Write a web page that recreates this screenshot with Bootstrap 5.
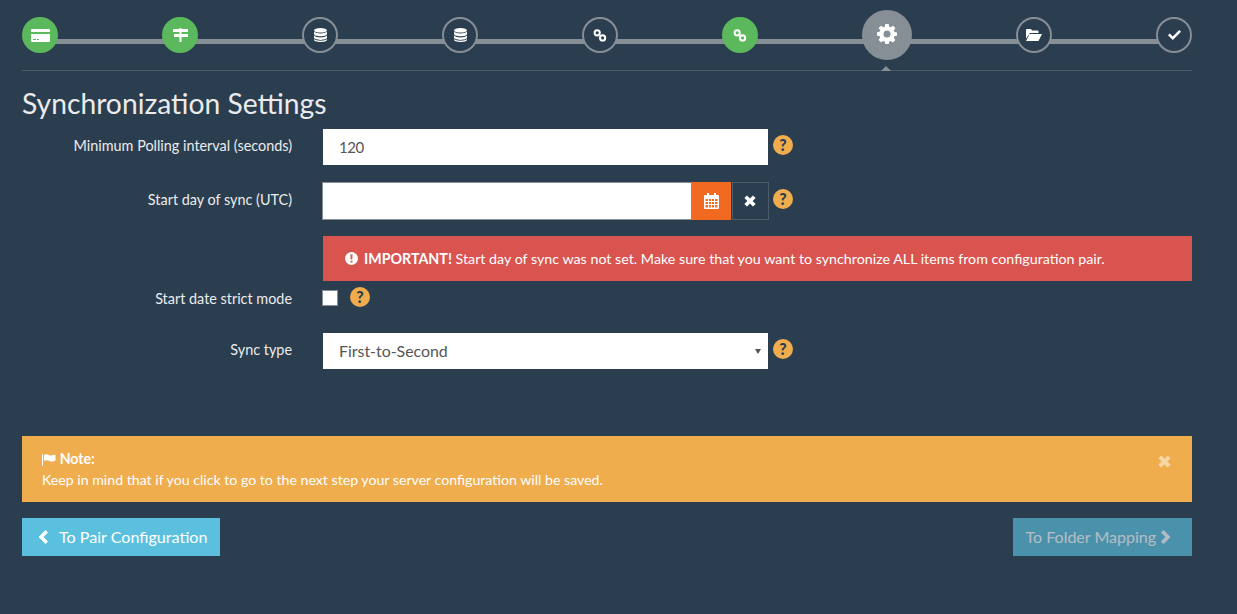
<!DOCTYPE html>
<html lang="en">
<head>
    <meta charset="UTF-8">
    <meta name="viewport" content="width=device-width, initial-scale=1.0">
    <title>Synchronization Settings</title>
    <link href="https://cdn.jsdelivr.net/npm/bootstrap@5.3.0/dist/css/bootstrap.min.css" rel="stylesheet">
    <style>
        html, body { height: 100%; }
        body { background: #2b3e50; color: #ebebeb; font-family: Lato, "Liberation Sans", sans-serif; font-size: 15px; overflow: hidden; }
        .page-wrap { width: 1170px; margin-left: 22px; }
        .stepper { height: 50px; margin-top: 10px; background: linear-gradient(#868e96, #868e96) no-repeat 18px 29px / calc(100% - 36px) 5px; }
        .step { width: 36px; height: 36px; border-radius: 50%; border: 2px solid #868e96; background: #2b3e50; color: #fff; position: relative; }
        .step.done { background: #5cb85c; border-color: #5cb85c; }
        .step.current { width: 50px; height: 50px; background: #868e96; }
        .step.current::after { content: ""; position: absolute; left: 17px; top: 54px; border: 5px solid transparent; border-top: 0; border-bottom-color: #868e96; }
        .step.current svg { margin-bottom: 2px; }
        .step svg { fill: #fff; display: block; }
        .step-rule { margin: 10px 0 0; border-top: 1px solid #4e5d6c; opacity: 1; }
        .page-title { font-size: 28.25px; font-weight: 400; color: #ebebeb; margin: 15px 0 9px; line-height: 34px; }
        .field-label { width: 270px; margin: 0 31px 0 0; padding-bottom: 3px; text-align: right; font-size: 14.4px; color: #ebebeb; }
        .field-box { width: 445px; }
        .form-control.plain, .form-select.plain { height: 36px; border: 0; border-radius: 0; padding: 0 16px; font-size: 15px; color: #555; background-color: #fff; box-shadow: none; }
        .form-control.plain { letter-spacing: -.5px; }
        .form-select.plain { font-size: 15.9px; background-image: url("data:image/svg+xml,%3Csvg xmlns='http://www.w3.org/2000/svg' viewBox='0 0 6 6'%3E%3Cpath fill='%23555' d='M0 1h6L3 6z'/%3E%3C/svg%3E"); background-size: 6px 6px; background-position: right 7px center; }
        .date-row { margin-top: 17px; }
        .date-group { width: 447px; margin-left: -1px; height: 38px; }
        .date-group .form-control { flex: 1 1 0; min-width: 0; height: 38px; border: 1px solid #868e96; border-right: 0; border-radius: 0; box-shadow: none; }
        .date-btn { flex: none; width: 40px; height: 38px; padding: 0; border: 0; border-radius: 0; display: flex; align-items: center; justify-content: center; background: #f26a21; }
        .date-btn.clear { width: 37px; margin-left: 1px; background: #2b3e50; border: 1px solid #4e5d6c; padding-right: 1px; }
        .date-btn svg { fill: #fff; display: block; }
        .help-mark { width: 20px; height: 20px; margin: 0 0 4px 5px; border-radius: 50%; background: #f0ad4e; color: #2b3e50; font-weight: 900; font-size: 16px; line-height: 20px; text-align: center; flex: none; }
        .date-row .help-mark { margin-left: 4px; }
        .sync-alert { margin: 16px 0 0 301px; height: 45px; padding: 0 22px; border: 0; border-radius: 0; background: #d9534f; color: #fff; font-size: 14.25px; }
        .sync-alert svg { fill: #fff; margin-right: 6px; }
        .check-row { height: 20px; margin-top: 7px; }
        .check-row .field-label { padding-bottom: 0; padding-top: 1px; }
        .check-row .help-mark { margin: 0 0 2px 12px; }
        .form-check-input[type=checkbox].sync-check { width: 16px; height: 16px; margin: 0 0 0 -1px; border-radius: 0; border: 1px solid #868e96; background-color: #fff; box-shadow: none; flex: none; }
        .type-row { margin-top: 25px; }
        .note-box { height: 66px; margin: 67px 0 16px; padding: 12px 20px 0; border: 0; border-radius: 0; background: #f0ad4e; color: #fff; font-size: 14.15px; line-height: 21px; }
        .note-box svg { fill: #fff; }
        .note-close { position: absolute; right: 21px; top: 19px; background: none; border: 0; padding: 0; opacity: .5; }
        .note-close svg { display: block; }
        .nav-btn { height: 38px; padding: 0 13px 0 16px; border: 0; border-radius: 0; font-size: 16.1px; color: #fff; display: flex; align-items: center; background: #5bc0de; }
        .nav-btn.next { padding: 0 21px 0 13px; font-size: 16px; }
        .nav-btn:disabled { color: #fff; background: #5bc0de; opacity: .65; }
        .nav-btn svg { fill: #fff; display: block; }
        .back-arrow { margin-right: 10px; }
        .next-arrow { margin-left: 4px; }
    </style>
</head>
<body>
    <div class="page-wrap">
        <!-- wizard steps -->
        <div class="stepper d-flex justify-content-between align-items-center">
            <div class="step done d-flex align-items-center justify-content-center">
                <svg width="19" height="13" viewBox="0 0 19 13"><path d="M1 0h17a1 1 0 0 1 1 1v2H0V1a1 1 0 0 1 1-1zM0 5h19v7a1 1 0 0 1-1 1H1a1 1 0 0 1-1-1zm2 5v1h3v-1zm4 0v1h2v-1z" fill-rule="evenodd"/></svg>
            </div>
            <div class="step done d-flex align-items-center justify-content-center">
                <svg width="15" height="14" viewBox="0 0 15 14"><path d="M0 1h15v3H0zM1 6h14v3H1zM6.500 0h2v14h-2z"/></svg>
            </div>
            <div class="step d-flex align-items-center justify-content-center">
                <svg width="13" height="14" viewBox="0 0 13 14"><ellipse cx="6.500" cy="2.300" rx="6.500" ry="2.300"/><path d="M0 3.600c1 1.300 3.500 2 6.500 2s5.500-.7 6.500-2v2.300c0 1.300-3 2.300-6.500 2.300S0 7.200 0 5.900zM0 7.400c1 1.300 3.500 2 6.500 2s5.500-.7 6.500-2v2.200c0 1.300-3 2.300-6.500 2.300S0 10.900 0 9.600z"/><path d="M0 11c1 1.200 3.500 1.700 6.500 1.700S12 12.200 13 11v.7c0 1.300-3 2.300-6.500 2.300S0 13 0 11.700z"/></svg>
            </div>
            <div class="step d-flex align-items-center justify-content-center">
                <svg width="13" height="14" viewBox="0 0 13 14"><ellipse cx="6.500" cy="2.300" rx="6.500" ry="2.300"/><path d="M0 3.600c1 1.300 3.500 2 6.500 2s5.500-.7 6.500-2v2.300c0 1.300-3 2.300-6.500 2.300S0 7.200 0 5.900zM0 7.400c1 1.300 3.500 2 6.500 2s5.500-.7 6.500-2v2.200c0 1.300-3 2.300-6.500 2.300S0 10.900 0 9.600z"/><path d="M0 11c1 1.200 3.500 1.700 6.500 1.700S12 12.200 13 11v.7c0 1.300-3 2.300-6.500 2.300S0 13 0 11.700z"/></svg>
            </div>
            <div class="step d-flex align-items-center justify-content-center">
                <svg width="14" height="13" viewBox="0 0 14 13"><g fill="none" stroke="#fff" stroke-width="2"><circle cx="4.200" cy="3.800" r="2.600"/><circle cx="9.600" cy="8.900" r="2.600"/></g></svg>
            </div>
            <div class="step done d-flex align-items-center justify-content-center">
                <svg width="14" height="13" viewBox="0 0 14 13"><g fill="none" stroke="#fff" stroke-width="2"><circle cx="4.200" cy="3.800" r="2.600"/><circle cx="9.600" cy="8.900" r="2.600"/></g></svg>
            </div>
            <div class="step current d-flex align-items-center justify-content-center">
                <svg width="20" height="20" viewBox="0 0 20 20"><path fill-rule="evenodd" d="M8.300 0h3.400l.5 2.700 1.500.6 2.300-1.600 2.400 2.400-1.600 2.300.6 1.500 2.600.5v3.400l-2.600.5-.6 1.500 1.600 2.300-2.400 2.400-2.300-1.600-1.500.6-.5 2.700H8.300l-.5-2.700-1.500-.6L4 18.300l-2.400-2.400 1.600-2.300-.6-1.500L0 11.700V8.300l2.600-.5.6-1.500-1.600-2.300L4 1.700l2.300 1.600 1.500-.6zM10 6.500a3.500 3.500 0 1 0 0 7 3.500 3.500 0 0 0 0-7z"/></svg>
            </div>
            <div class="step d-flex align-items-center justify-content-center">
                <svg width="16" height="12" viewBox="0 0 16 12"><path d="M0 1a1 1 0 0 1 1-1h4l1 1.500h5.500a1 1 0 0 1 1 1V4H4L0 9.500zM3.500 5H16l-3.500 7H0z"/></svg>
            </div>
            <div class="step d-flex align-items-center justify-content-center">
                <svg width="13" height="10" viewBox="0 0 13 10"><path d="M0 5.200 1.800 3.400l3 3L11.200 0 13 1.800 4.800 10z"/></svg>
            </div>
        </div>
        <hr class="step-rule">

        <h3 class="page-title">Synchronization Settings</h3>

        <form>
            <div class="d-flex align-items-center">
                <label class="field-label">Minimum Polling interval (seconds)</label>
                <div class="field-box"><input type="text" class="form-control plain" value="120"></div>
                <span class="help-mark">?</span>
            </div>
            <div class="d-flex align-items-center date-row">
                <label class="field-label">Start day of sync (UTC)</label>
                <div class="d-flex date-group">
                    <input type="text" class="form-control plain">
                    <button type="button" class="date-btn">
                        <svg width="15" height="16" viewBox="0 0 15 16"><path fill-rule="evenodd" d="M1 2h2V0h2v2h5V0h2v2h2a1 1 0 0 1 1 1v12a1 1 0 0 1-1 1H1a1 1 0 0 1-1-1V3a1 1 0 0 1 1-1zm.5 4v2h2.500V6zm3.500 0v2h2V6zm3 0v2h2V6zm3 0v2h2.500V6zM1.500 9v2h2.500V9zM5 9v2h2V9zm3 0v2h2V9zm3 0v2h2.500V9zM1.500 12v2.500h2.500V12zM5 12v2.500h2V12zm3 0v2.500h2V12zm3 0v2.500h2.500V12z"/></svg>
                    </button>
                    <button type="button" class="date-btn clear">
                        <svg width="12" height="12" viewBox="0 0 12 12"><path d="M3 .4 6 3.400 9 .4 11.600 3 8.600 6l3 3L9 11.600l-3-3-3 3L.4 9l3-3-3-3z"/></svg>
                    </button>
                </div>
                <span class="help-mark">?</span>
            </div>
            <div class="alert sync-alert d-flex align-items-center">
                <svg width="13" height="13" viewBox="0 0 13 13"><path fill-rule="evenodd" d="M6.500 0a6.500 6.500 0 1 1 0 13 6.500 6.500 0 0 1 0-13zM5.400 2.500l.3 5h1.600l.3-5zm.1 6.200v1.800h2V8.700z"/></svg>
                <span><strong>IMPORTANT!</strong> Start day of sync was not set. Make sure that you want to synchronize ALL items from configuration pair.</span>
            </div>
            <div class="d-flex align-items-center check-row">
                <label class="field-label">Start date strict mode</label>
                <input type="checkbox" class="form-check-input sync-check">
                <span class="help-mark">?</span>
            </div>
            <div class="d-flex align-items-center type-row">
                <label class="field-label">Sync type</label>
                <div class="field-box">
                    <select class="form-select plain">
                        <option>First-to-Second</option>
                        <option>Second-to-First</option>
                        <option>Two-way</option>
                    </select>
                </div>
                <span class="help-mark">?</span>
            </div>
        </form>

        <div class="alert note-box position-relative">
            <button type="button" class="note-close" aria-label="Close">
                <svg width="13" height="13" viewBox="0 0 12 12"><path d="M3 .4 6 3.400 9 .4 11.600 3 8.600 6l3 3L9 11.600l-3-3-3 3L.4 9l3-3-3-3z"/></svg>
            </button>
            <div><svg width="14" height="12" viewBox="0 0 14 12"><path d="M0 0h1v12H0zM2 1c2-1 3.500-.8 5 0s3 .8 5-.2c.8-.3 1.500-.2 1.500.5V6.500c-2 1.300-4 1.500-6 .5s-3.500-.8-5.500 0z"/></svg> <strong>Note:</strong></div>
            <div>Keep in mind that if you click to go to the next step your server configuration will be saved.</div>
        </div>

        <div class="d-flex justify-content-between">
            <button type="button" class="btn nav-btn">
                <svg width="11" height="14" viewBox="0 0 11 14" class="back-arrow"><path d="M7.500 0 10 2.500 5.500 7 10 11.500 7.500 14 .5 7z"/></svg>
                To Pair Configuration
            </button>
            <button type="button" class="btn nav-btn next" disabled>
                To Folder Mapping
                <svg width="11" height="14" viewBox="0 0 11 14" class="next-arrow"><path d="M3.500 0 1 2.500 5.500 7 1 11.500 3.500 14l7-7z"/></svg>
            </button>
        </div>
    </div>
    <script src="https://cdn.jsdelivr.net/npm/bootstrap@5.3.0/dist/js/bootstrap.bundle.min.js"></script>
</body>
</html>
